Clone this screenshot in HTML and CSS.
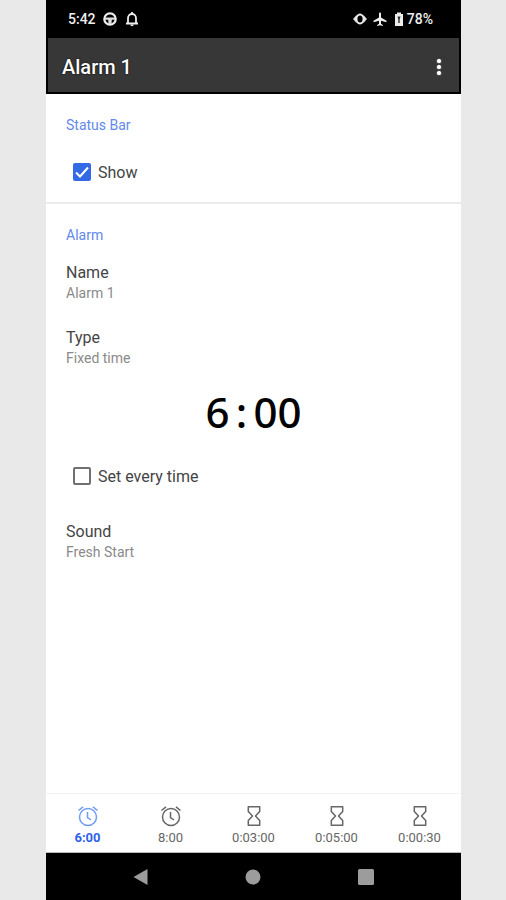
FILE: index.html
```html
<!DOCTYPE html>
<html lang="en">
<head>
<meta charset="utf-8">
<meta name="viewport" content="width=device-width, initial-scale=1">
<title>Alarm 1</title>
<link rel="stylesheet" href="styles.css">
</head>
<body>
<svg class="defs" aria-hidden="true">
  <symbol id="clock" viewBox="0 0 22 22">
    <g fill="none" stroke="currentColor" stroke-width="1.5">
      <circle cx="11" cy="12" r="8.5"/>
      <path d="M10.5 7v5.5l3.5 2.5M1.5 5.500 6 1.800M20.500 5.500 16 1.800"/>
    </g>
  </symbol>
  <symbol id="hourglass" viewBox="0 0 22 22">
    <path fill="none" stroke="currentColor" stroke-width="1.5" stroke-linejoin="round" d="M5.300 1.800h11.400v4.700L12.500 11l4.200 4.500v4.700H5.300v-4.700L9.500 11 5.300 6.500z"/>
  </symbol>
</svg>
<div class="phone">
  <div class="status">
    <span>5:42</span>
    <svg class="status-icon wheel" viewBox="0 0 16 16"><circle cx="8" cy="8" r="5.700" fill="none" stroke="#eee" stroke-width="2.200"/><path d="M3 6.500h10v2.300h-3.200L9.500 13h-3l-.3-4.200H3z" fill="#ddd"/></svg>
    <svg class="status-icon bell" viewBox="0 0 16 16"><path d="M2 12.500h12M4 12V7.200C4 4.700 5.800 3 8 3s4 1.700 4 4.200V12M8 1v2" fill="none" stroke="#eee" stroke-width="1.800"/><path d="M6.300 13.500h3.400a1.700 1.700 0 0 1-3.400 0z" fill="#eee"/></svg>
    <span class="spacer"></span>
    <svg class="status-icon eye" viewBox="0 0 16 16"><path d="M1 8 4.500 4v8zM15 8l-3.500-4v8z" fill="#ddd"/><ellipse cx="8" cy="8" rx="3.600" ry="4.500" fill="none" stroke="#eee" stroke-width="2"/></svg>
    <svg class="status-icon plane" viewBox="0 0 16 16"><path fill="#eee" d="M7 2.500a1 1 0 0 1 2 0v4l5.500 3.200v1.500L9 9.700v3l1.800 1.300v1L8 14.300 5.200 15v-1L7 12.700v-3l-5.500 1.500V9.700L7 6.500z"/></svg>
    <svg class="battery" viewBox="0 0 10 16"><path fill="#eee" d="M3 1.500h4V3h2v12H1V3h2z"/><path d="M3.500 5.500h3L5.700 8.500V12H4.300V8.500z" fill="#333"/></svg>
    <span>78%</span>
  </div>
  <header class="appbar">
    <h1>Alarm 1</h1>
    <button class="more" aria-label="More options"><svg viewBox="0 0 10 20"><g fill="#fff" stroke="#111" stroke-width=".6"><circle cx="5" cy="4" r="2.600"/><circle cx="5" cy="10" r="2.600"/><circle cx="5" cy="16" r="2.600"/></g></svg></button>
  </header>
  <main>
    <section class="group">
      <h2>Status Bar</h2>
      <label class="check"><input type="checkbox" checked>Show</label>
    </section>
    <section class="group">
      <h2>Alarm</h2>
      <div class="setting"><div class="name">Name</div><div class="value">Alarm 1</div></div>
      <div class="setting"><div class="name">Type</div><div class="value">Fixed time</div></div>
      <div class="time">6<span class="colon">:</span>00</div>
      <label class="check"><input type="checkbox">Set every time</label>
      <div class="setting sound"><div class="name">Sound</div><div class="value">Fresh Start</div></div>
    </section>
  </main>
  <nav class="tabs">
    <button class="tab active"><svg><use href="#clock"/></svg>6:00</button>
    <button class="tab"><svg><use href="#clock"/></svg>8:00</button>
    <button class="tab"><svg><use href="#hourglass"/></svg>0:03:00</button>
    <button class="tab"><svg><use href="#hourglass"/></svg>0:05:00</button>
    <button class="tab"><svg><use href="#hourglass"/></svg>0:00:30</button>
  </nav>
  <div class="system">
    <button aria-label="Back"><svg viewBox="0 0 18 18"><path d="M1.500 9 15.500 1v16z"/></svg></button>
    <button aria-label="Home"><svg viewBox="0 0 18 18"><circle cx="9" cy="9" r="7.500"/></svg></button>
    <button aria-label="Recent apps"><svg viewBox="0 0 18 18"><rect x="1" y="1" width="16" height="16" rx="1.500"/></svg></button>
  </div>
</div>
</body>
</html>
```
FILE: styles.css
```css
* { box-sizing: border-box; }
body {
  margin: 0;
  padding: 0 45px 0 46px;
  background: #e9e9e9;
  font-family: Roboto, sans-serif;
  color: #444;
}
button {
  border: 0;
  padding: 0;
  background: none;
  font: inherit;
  color: inherit;
}
svg { display: block; }
.defs { position: absolute; width: 0; height: 0; }
.phone {
  display: flex;
  flex-direction: column;
  min-height: 100vh;
  background: #fff;
}
.status {
  display: flex;
  align-items: center;
  height: 38px;
  padding: 0 28px 0 22px;
  background: #000;
  color: #eee;
  font-size: 14px;
  font-weight: 500;
}
.status-icon { width: 16px; height: 16px; }
.wheel { margin-left: 6px; }
.bell { margin-left: 6px; }
.spacer { flex: 1; }
.plane { margin: 0 6px 0 4px; }
.battery { width: 10px; height: 16px; margin-right: 3px; }
.appbar {
  display: flex;
  align-items: center;
  justify-content: space-between;
  height: 56px;
  padding: 4px 12px 0 14px;
  background: #373737;
  border: solid #000;
  border-width: 0 2px 2px;
  color: #fff;
}
h1 { margin: 0; font-size: 20px; font-weight: 500; text-shadow: 0 0 2px #000; }
.more { width: 16px; height: 20px; }
.more svg { width: 10px; height: 20px; margin: 0 auto; }
main { flex: 1; }
.group { padding: 20px 20px 0; }
.group:first-child { height: 110px; border-bottom: 2px solid #ececec; }
h2 {
  margin: 0;
  font-size: 14px;
  line-height: 22px;
  font-weight: 400;
  color: #6289ea;
}
.check {
  display: flex;
  align-items: center;
  gap: 7px;
  height: 24px;
  margin-left: 7px;
  font-size: 16px;
}
h2 + .check { margin-top: 24px; }
.check input {
  appearance: none;
  width: 18px;
  height: 18px;
  margin: 0;
  border: 2px solid #707070;
  border-radius: 2px;
}
.check input:checked {
  border-color: #3469e6;
  background: #3469e6 url("data:image/svg+xml,%3Csvg xmlns='http://www.w3.org/2000/svg' viewBox='0 0 14 14'%3E%3Cpath d='M1 7.500l4 4 8-9' fill='none' stroke='white' stroke-width='2'/%3E%3C/svg%3E") center / 14px no-repeat;
}
.setting { margin-top: 25px; }
h2 + .setting { margin-top: 17px; }
.name { font-size: 16px; line-height: 20px; }
.value { font-size: 14px; line-height: 20px; color: #8a8a8a; }
.time {
  margin: 14px 0;
  text-align: center;
  font-family: "Noto Sans", sans-serif;
  font-size: 42px;
  font-weight: 500;
  line-height: 60px;
  color: #000;
}
.colon { display: inline-block; width: 24px; }
.time + .check { margin-top: 22px; }
.sound { margin-top: 34px; }
.tabs {
  display: grid;
  grid-template-columns: repeat(5, 1fr);
  height: 60px;
  border-top: 1px solid #f4f4f4;
  border-bottom: 1px solid #bbb;
}
.tab {
  display: flex;
  flex-direction: column;
  align-items: center;
  gap: 3px;
  padding-top: 11px;
  font-size: 13px;
  line-height: 16px;
  color: #666;
}
.tab svg { width: 22px; height: 22px; }
.active { color: #2f62e8; font-weight: 700; }
.active svg { color: #709bf5; }
.system {
  display: grid;
  grid-template-columns: repeat(3, 1fr);
  height: 47px;
  padding: 0 39px;
  background: #000;
}
.system button { display: grid; place-items: center; }
.system svg { width: 18px; height: 18px; fill: #9c9c9c; }
```
